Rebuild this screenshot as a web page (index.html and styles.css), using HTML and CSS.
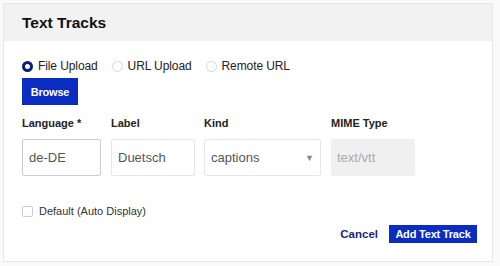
FILE: index.html
```html
<!DOCTYPE html>
<html lang="en">
    <head>
        <meta charset="UTF-8" />
        <meta name="viewport" content="width=device-width, initial-scale=1.0"/>
        <title>Text Tracks</title>
        <link rel="stylesheet" href="styles.css">
    </head>
    <body>
        <div class="panel">
            <div class="panel-header">Text Tracks</div>
            <div class="panel-body">
                <div class="sources">
                    <label class="radio"><span class="dot checked"></span>File Upload</label>
                    <label class="radio"><span class="dot"></span>URL Upload</label>
                    <label class="radio"><span class="dot"></span>Remote URL</label>
                </div>
                <button class="btn browse">Browse</button>

                <div class="fields">
                    <div class="field lang">
                        <div class="field-label">Language *</div>
                        <div class="input focused">de-DE</div>
                    </div>
                    <div class="field label">
                        <div class="field-label">Label</div>
                        <div class="input">Duetsch</div>
                    </div>
                    <div class="field kind">
                        <div class="field-label">Kind</div>
                        <div class="input select">captions<span class="arrow">▼</span></div>
                    </div>
                    <div class="field mime">
                        <div class="field-label">MIME Type</div>
                        <div class="input disabled">text/vtt</div>
                    </div>
                </div>

                <label class="check"><span class="box"></span>Default (Auto Display)</label>

                <div class="actions">
                    <a class="cancel">Cancel</a>
                    <button class="btn add">Add Text Track</button>
                </div>
            </div>
        </div>
    </body>
</html>
```

FILE: styles.css
```css
* {
    margin: 0;
    padding: 0;
    box-sizing: border-box;
}

body {
    background: #fafafa;
    font-family: 'Liberation Sans', Arial, sans-serif;
    color: #222;
    padding: 3px 8px 0 3px;
}

.panel {
    background: #fff;
    border: 1px solid #e6e6e6;
    width: 490px;
    height: 259px;
}

.panel-header {
    background: #f2f2f2;
    height: 37px;
    padding: 10px 18px;
    font-size: 15.5px;
    font-weight: bold;
    color: #111;
}

.panel-body {
    padding: 18px 18px 0 18px;
}

.sources {
    display: flex;
    gap: 14px;
    font-size: 12px;
    letter-spacing: -0.1px;
    color: #222;
}

.radio {
    display: flex;
    align-items: center;
    gap: 5px;
}

.dot {
    width: 11px;
    height: 11px;
    border-radius: 50%;
    border: 1px solid #d6d6d6;
    background: #fff;
}

.dot.checked {
    border: 3px solid #0b1b7a;
    background: #fff;
}

.btn {
    border: none;
    background: #0a2cc0;
    color: #fff;
    font-family: inherit;
    font-weight: bold;
    font-size: 11px;
    letter-spacing: -0.2px;
}

.browse {
    margin-top: 5px;
    width: 56px;
    height: 27px;
}

.fields {
    display: flex;
    margin-top: 10px;
}

.field-label {
    font-size: 11px;
    font-weight: bold;
    color: #222;
    height: 18px;
    padding-top: 2px;
}

.input {
    margin-top: 6px;
    height: 37px;
    border: 1px solid #e6e6e6;
    border-radius: 2px;
    padding: 0 6px;
    display: flex;
    align-items: center;
    font-size: 13px;
    color: #555;
}

.input.focused {
    border-color: #ccc;
}

.lang { width: 79px; margin-right: 10px; }
.label { width: 84px; margin-right: 9px; }
.kind { width: 117px; margin-right: 10px; }
.mime { width: 84px; }

.select {
    justify-content: space-between;
}

.arrow {
    font-size: 9px;
    color: #888;
    margin-right: 0;
}

.disabled {
    border: none;
    background: #f0f0f0;
    color: #aaa;
}

.check {
    display: flex;
    align-items: center;
    gap: 6px;
    margin-top: 29px;
    font-size: 11px;
    color: #333;
}

.box {
    width: 11px;
    height: 11px;
    border: 1px solid #ccc;
    border-radius: 2px;
}

.actions {
    display: flex;
    justify-content: flex-end;
    align-items: center;
    gap: 11px;
    margin-top: 8px;
    margin-right: -3px;
}

.cancel {
    font-size: 11.5px;
    font-weight: bold;
    color: #1b1f8a;
}

.add {
    width: 88px;
    height: 18px;
}
```
